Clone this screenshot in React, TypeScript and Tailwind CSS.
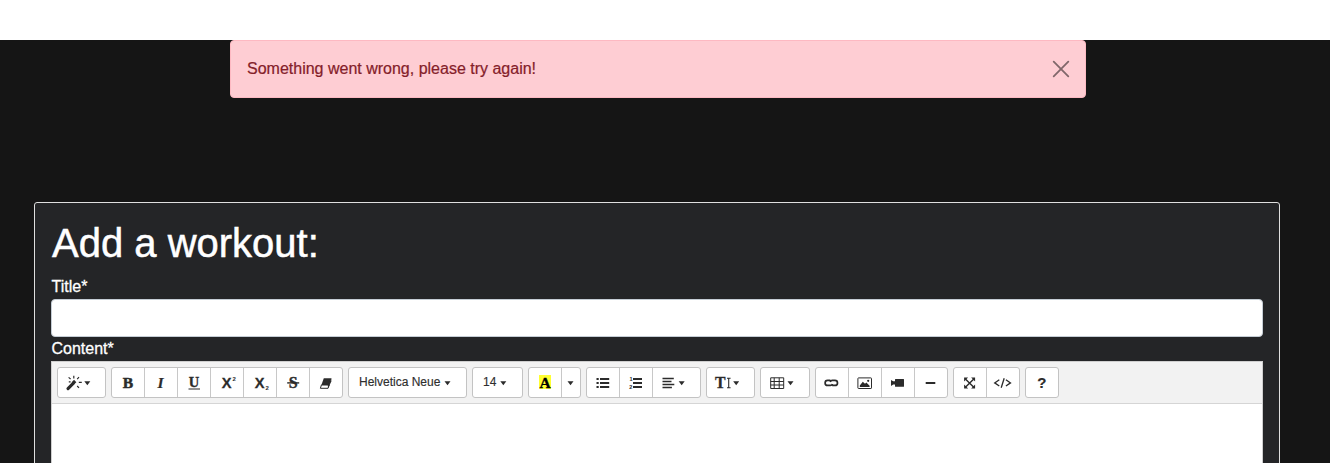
import React from "react";

type Kids = { children?: React.ReactNode };

const Group = ({ children }: Kids) => (
  <div className="flex h-[31px] rounded-[3px] border border-[#c3c3c3] bg-white divide-x divide-[#c8c8c8] overflow-hidden">
    {children}
  </div>
);

const Tool = ({ label, w = 32, children }: Kids & { label: string; w?: number }) => (
  <button type="button" aria-label={label} className="block box-content shrink-0 h-[29px]">
    <svg width={w} height={29} viewBox={`0 0 ${w} 29`} fill="#2b2b2b" className="block">
      {children}
    </svg>
  </button>
);

const Caret = ({ x }: { x: number }) => <path d={`M${x} 13.2h6l-3 4.1z`} />;

const serif = "'Liberation Serif', serif";
const sans = "'Liberation Sans', sans-serif";
const line = { fill: "none", stroke: "#2b2b2b" };

function Toolbar() {
  return (
    <div className="flex h-[42px] gap-[5px] border-b border-[#d5d5d5] bg-[#f2f2f2] pl-[5px] pt-[5px]">
      <Group>
        <Tool label="Style" w={47}>
          <path d="M10 20.6l5.2-5.2" {...line} strokeWidth="3.1" strokeLinecap="round" />
          <path d="M14.8 15.4l2.4-2.4" {...line} strokeWidth="3.3" />
          <path d="M15.8 7.8v2.6M10.6 9.4l2 1.6M21 9.2l-1.8 1.9M20.8 14.4h3M19.2 18l1.8 1.9M10.8 13.8h1.8" {...line} strokeWidth="1.2" />
          <Caret x={26.3} />
        </Tool>
      </Group>
      <Group>
        <Tool label="Bold">
          <text x="10.8" y="20.3" fontFamily={serif} fontSize="15.6" fontWeight="700" stroke="#2b2b2b" strokeWidth=".5">B</text>
        </Tool>
        <Tool label="Italic">
          <text x="12.6" y="20.3" fontFamily={serif} fontSize="15.6" fontWeight="700" fontStyle="italic" stroke="#2b2b2b" strokeWidth=".2">I</text>
        </Tool>
        <Tool label="Underline">
          <text x="10.8" y="19.2" fontFamily={serif} fontSize="14.5" fontWeight="700" stroke="#2b2b2b" strokeWidth=".3">U</text>
          <rect x="10.5" y="20.5" width="11.5" height="1" />
        </Tool>
        <Tool label="Superscript">
          <text x="10.7" y="20.3" fontFamily={sans} fontSize="14.6" fontWeight="700" stroke="#2b2b2b" strokeWidth=".3">X</text>
          <text x="21.5" y="13.3" fontFamily={sans} fontSize="6" fontWeight="700">2</text>
        </Tool>
        <Tool label="Subscript">
          <text x="10.7" y="20.3" fontFamily={sans} fontSize="14.6" fontWeight="700" stroke="#2b2b2b" strokeWidth=".3">X</text>
          <text x="21.6" y="22.3" fontFamily={sans} fontSize="6" fontWeight="700">2</text>
        </Tool>
        <Tool label="Strikethrough">
          <text x="11.8" y="20.3" fontFamily={serif} fontSize="16" fontWeight="700" stroke="#2b2b2b" strokeWidth=".4">S</text>
          <rect x="10.2" y="14.2" width="12" height="1.4" />
        </Tool>
        <Tool label="Clear formatting">
          <path d="M13.8 10.3h7.7l-2.4 6.8h-7.7z" />
          <path d="M11.4 17l-1 3.3h7.6l1.2-3.3z" {...line} strokeWidth="1" />
          <path d="M21.3 10.6v3l-3.2 6.8-.3-3.4z" />
        </Tool>
      </Group>
      <Group>
        <button type="button" className="flex w-[117px] h-[29px] items-start pl-[10px] text-[12px] text-[#2e2e2e]">
          <span className="w-[82px] pt-px text-left leading-[27px] [-webkit-text-stroke:0.15px_#2e2e2e]">Helvetica Neue</span>
          <svg width="10" height="29" fill="#2b2b2b" className="ml-[3px]"><Caret x={0.5} /></svg>
        </button>
      </Group>
      <Group>
        <button type="button" className="flex w-[49px] h-[29px] items-start pl-[10px] text-[12px] text-[#2e2e2e]">
          <span className="w-[14px] pt-px text-left leading-[27px] [-webkit-text-stroke:0.15px_#2e2e2e]">14</span>
          <svg width="10" height="29" fill="#2b2b2b" className="ml-[3px]"><Caret x={0.3} /></svg>
        </button>
      </Group>
      <Group>
        <Tool label="Recent color">
          <rect x="10" y="7" width="12" height="14" fill="#ffff32" />
          <text x="10.4" y="20" fontFamily={serif} fontSize="15.5" fontWeight="700" fill="#000" stroke="#000" strokeWidth=".3">A</text>
        </Tool>
        <Tool label="More color" w={18}><Caret x={5.5} /></Tool>
      </Group>
      <Group>
        <Tool label="Unordered list">
          {[10, 14, 18].map((y) => (
            <g key={y}>
              <rect x="9.5" y={y} width="2.2" height="2" />
              <rect x="13" y={y} width="9.2" height="2" />
            </g>
          ))}
        </Tool>
        <Tool label="Ordered list">
          {[10, 14, 18].map((y) => <rect key={y} x="13" y={y} width="9" height="2" />)}
          <text x="9.4" y="13.4" fontFamily={sans} fontSize="5.5" fontWeight="700">1</text>
          <text x="9.2" y="20.5" fontFamily={sans} fontSize="5.5" fontWeight="700">2</text>
        </Tool>
        <Tool label="Paragraph" w={47}>
          <path d="M9.5 10.6h11.3M9.5 13.6h9M9.5 16.6h11.8M9.5 19.6h9.4" {...line} strokeWidth="1.5" />
          <Caret x={25.7} />
        </Tool>
      </Group>
      <Group>
        <Tool label="Line height" w={47}>
          <text x="8.1" y="20.2" fontFamily={serif} fontSize="15.8" fontWeight="700" stroke="#2b2b2b" strokeWidth=".3">T</text>
          <path d="M21.7 10.5v9M20 10.3h3.6M20 19.7h3.6" {...line} strokeWidth="1.1" />
          <Caret x={26.2} />
        </Tool>
      </Group>
      <Group>
        <Tool label="Table" w={48}>
          <path d="M9.7 9.8h13v10.7h-13zM9.7 13.5h13M9.7 17h13M13.2 9.8v10.7M18.2 9.8v10.7" {...line} strokeWidth="1" />
          <Caret x={26.5} />
        </Tool>
      </Group>
      <Group>
        <Tool label="Link">
          <path d="M14.4 12.4h-2.8a2.5 2.5 0 0 0 0 5h2.8q1.5 0 2-1.5M16.2 17.4h2.8a2.5 2.5 0 0 0 0-5h-2.8q-1.5 0-2 1.5" {...line} strokeWidth="1.7" />
        </Tool>
        <Tool label="Picture">
          <rect x="8.9" y="9.9" width="13.6" height="10.6" rx=".6" {...line} strokeWidth="1" />
          <path d="M10.8 19v-1.5l3-3.8 2.2 2.1 1.3-1.3 3.3 3.3V19z" />
          <circle cx="19.2" cy="12.8" r="1.1" />
        </Tool>
        <Tool label="Video">
          <rect x="13" y="11" width="9" height="7.7" rx=".5" />
          <path d="M9 12l2.2 1.3h2v3.2h-2L9 17.9z" />
        </Tool>
        <Tool label="Horizontal rule"><rect x="10.7" y="14" width="9.6" height="2" /></Tool>
      </Group>
      <Group>
        <Tool label="Full screen">
          <path d="M11.4 10.9l8.4 8.4M19.8 10.9l-8.4 8.4" {...line} strokeWidth="1.4" />
          <path d="M10.1 9.6h4l-4 4zM21.1 9.6v4l-4-4zM10.1 20.6v-4l4 4zM21.1 20.6h-4l4-4z" />
        </Tool>
        <Tool label="Code view">
          <path d="M12.3 11.8l-4.6 3.1 4.6 3.1M18.9 11.8l4.6 3.1-4.6 3.1M17.2 10.2l-3 9.6" {...line} strokeWidth="1.3" />
        </Tool>
      </Group>
      <Group>
        <Tool label="Help">
          <text x="11.2" y="20.2" fontFamily={sans} fontSize="15" fontWeight="700" stroke="#2b2b2b" strokeWidth=".2">?</text>
        </Tool>
      </Group>
    </div>
  );
}

export default function App() {
  return (
    <div className="flex h-[463px] w-full flex-col overflow-hidden bg-[#151515] font-['Liberation_Sans',sans-serif] text-base">
      <header className="h-10 shrink-0 bg-white" />
      <div role="alert" className="ml-[230px] flex h-[58px] w-[856px] shrink-0 items-center justify-between rounded-[4px] border border-[#fdb9c2] bg-[#fecdd3] pl-4 pr-[15px] text-[#842029]">
        <span className="[-webkit-text-stroke:0.2px_#842029]">Something went wrong, please try again!</span>
        <button type="button" aria-label="Close">
          <svg width="18" height="18" viewBox="0 0 18 18" fill="none" stroke="#80676a" strokeWidth="1.8" strokeLinecap="round">
            <path d="M1.7 1.7l14.6 14.6M16.3 1.7L1.7 16.3" />
          </svg>
        </button>
      </div>
      <main className="ml-[34px] mt-[104px] h-[400px] w-[1246px] shrink-0 rounded-[3px] border border-[#dfdfdf] bg-[#242527] px-4 pt-4 text-white">
        <h1 className="h-14 pl-px text-[40px] leading-12 [-webkit-text-stroke:0.5px_white]">Add a workout:</h1>
        <label htmlFor="title" className="block h-6 pl-[0.5px] leading-6 [-webkit-text-stroke:0.3px_white]">Title*</label>
        <input id="title" className="block h-[38px] w-full rounded-[4px] border border-[#c5cdd5] bg-white px-3 text-black" />
        <label className="block h-6 pl-[0.5px] leading-6 [-webkit-text-stroke:0.3px_white]">Content*</label>
        <section className="h-[300px] border border-[#cfcfcf] bg-white">
          <Toolbar />
        </section>
      </main>
    </div>
  );
}
